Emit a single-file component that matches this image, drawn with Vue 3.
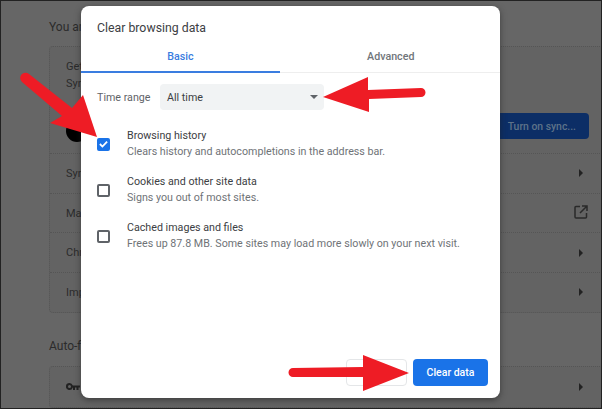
<script setup>
const rows = [
  { label: 'Sync and Google services', icon: 'chev' },
  { label: 'Manage your Google Account', icon: 'ext' },
  { label: 'Chrome name and picture', icon: 'chev' },
  { label: 'Import bookmarks and settings', icon: 'chev' },
]
const options = [
  { title: 'Browsing history', desc: 'Clears history and autocompletions in the address bar.', on: true },
  { title: 'Cookies and other site data', desc: 'Signs you out of most sites.', on: false },
  { title: 'Cached images and files', desc: 'Frees up 87.8 MB. Some sites may load more slowly on your next visit.', on: false },
]
</script>

<template>
  <div class="screen">
    <div class="page">
      <h2 class="head first">You and Google</h2>
      <section class="card">
        <div class="sync">
          <div class="sync-text">
            <div>Get Google smarts in Chrome</div>
            <div>Sync and personalize Chrome</div>
            <span class="avatar"></span>
          </div>
          <span class="sync-btn">Turn on sync...</span>
        </div>
        <div v-for="r in rows" :key="r.label" class="row">
          <span>{{ r.label }}</span>
          <svg v-if="r.icon === 'chev'" class="chev" width="6" height="8" viewBox="0 0 6 8"><path d="M1 0l4 4-4 4z" fill="#222" /></svg>
          <svg v-else class="ext" width="14" height="14" viewBox="0 0 14 14" fill="none" stroke="#2a2a2a" stroke-width="1.5"><path d="M6 1.500H2a1 1 0 0 0-1 1v9.500a1 1 0 0 0 1 1h9.500a1 1 0 0 0 1-1V8M8 1h5v5M13 1L6 8" /></svg>
        </div>
      </section>
      <h2 class="head second">Auto-fill</h2>
      <section class="card">
        <div class="row key-row">
          <svg width="14" height="8" viewBox="0 0 14 8" fill="#222"><path d="M3.500 0a3.500 3.500 0 0 1 3.300 2.500H14v2h-1.500V7h-2V4.500H9V7H7V4.500h-.2A3.500 3.500 0 1 1 3.500 0zm0 2a1.500 1.500 0 1 0 0 3 1.500 1.500 0 0 0 0-3z" /></svg>
          <svg class="chev" width="6" height="8" viewBox="0 0 6 8"><path d="M1 0l4 4-4 4z" fill="#222" /></svg>
        </div>
      </section>
    </div>

    <div class="dialog">
      <h1 class="title">Clear browsing data</h1>
      <div class="tabs">
        <div class="tab active">Basic</div>
        <div class="tab">Advanced</div>
      </div>
      <div class="range">
        <span class="range-label">Time range</span>
        <div class="select">
          <span>All time</span>
          <span class="caret"></span>
        </div>
      </div>
      <div class="options">
        <div v-for="o in options" :key="o.title" class="option">
          <span class="box" :class="{ on: o.on }">
            <svg v-if="o.on" width="10" height="8" viewBox="0 0 10 8" fill="none" stroke="#fff" stroke-width="2"><path d="M1 4l2.800 2.800L9 1.300" /></svg>
          </span>
          <div>
            <div class="opt-title">{{ o.title }}</div>
            <div class="opt-desc">{{ o.desc }}</div>
          </div>
        </div>
      </div>
      <div class="actions">
        <span class="cancel"></span>
        <span class="clear">Clear data</span>
      </div>
    </div>

    <svg class="arrows" width="602" height="409" viewBox="0 0 602 409" fill="#ee1c25" stroke="none">
      <path d="M97 137L83 95 72 108 29 74a5 5 0 0 0-7 8L62 116 50 123z" />
      <path d="M323 97L368 77 368 90 421 88a4.500 4.500 0 0 1 0 9L369 99 369 112z" />
      <path d="M409 373L363 355 363 367 293 368a4.500 4.500 0 0 0 0 9L363 377 363 391z" />
    </svg>
  </div>
</template>

<style scoped>
.screen {
  position: relative;
  width: 602px;
  height: 409px;
  overflow: hidden;
  box-sizing: border-box;
  border: 1px solid #222;
  background: #666;
  font-family: Roboto, "Liberation Sans", sans-serif;
  color: #2b2b2b;
}
.page {
  width: 600px;
  padding: 0 0 0 48px;
  font-size: 11px;
}
.head {
  margin: 0;
  font-size: 12px;
  font-weight: 400;
  line-height: 16px;
}
.head.first { padding: 18px 0 11px; }
.head.second { padding: 25px 0 12px; }
.card {
  border: 1px dotted #555;
  border-radius: 4px;
  background: #636363;
}
.sync {
  display: flex;
  justify-content: space-between;
  height: 106px;
  padding-right: 59px;
}
.sync-text {
  padding: 11px 0 0 16px;
  line-height: 17px;
}
.avatar {
  display: block;
  width: 22px;
  height: 22px;
  margin-top: 28px;
  border-radius: 50%;
  background: #000;
}
.sync-btn {
  align-self: flex-end;
  display: flex;
  align-items: center;
  justify-content: flex-end;
  box-sizing: border-box;
  width: 110px;
  height: 26px;
  margin-bottom: 14px;
  padding-right: 13px;
  border-radius: 4px;
  background: #0c2e66;
  color: #5e7389;
  font-size: 10.400px;
  font-weight: 500;
}
.row {
  display: flex;
  align-items: center;
  justify-content: space-between;
  box-sizing: border-box;
  height: 39.7px;
  padding: 0 64px 0 16px;
  border-top: 1px dotted #555;
}
.row .ext { margin: -2px -4px 0 0; }
.key-row { border-top: 0; height: 40px; }
.dialog {
  position: absolute;
  left: 80px;
  top: 5px;
  box-sizing: border-box;
  width: 419px;
  height: 392px;
  display: flex;
  flex-direction: column;
  border-radius: 8px;
  background: #fff;
  box-shadow: 0 2px 6px rgba(30, 30, 30, .55);
  color: #202124;
}
.title {
  margin: 0;
  padding: 14px 16px 0;
  font-size: 12.300px;
  font-weight: 400;
  line-height: 16px;
  color: #3c4043;
}
.tabs {
  display: flex;
  margin-top: 5px;
  border-bottom: 1px solid #eee;
}
.tab {
  width: 50%;
  height: 32px;
  box-sizing: border-box;
  padding-top: 8px;
  text-align: center;
  font-size: 10.700px;
  font-weight: 500;
  line-height: 16px;
  color: #70757a;
  margin-bottom: -1px;
}
.tab:last-child { padding-left: 12px; }
.tab.active {
  width: 199px;
  color: #3a7de0;
  border-bottom: 2px solid #3a7de0;
}
.range {
  display: flex;
  align-items: center;
  margin-top: 11px;
  padding-left: 16px;
}
.range-label {
  width: 63px;
  font-size: 10.700px;
  color: #5f6368;
}
.select {
  display: flex;
  align-items: center;
  justify-content: space-between;
  box-sizing: border-box;
  width: 164px;
  height: 26px;
  padding: 0 6px 0 7px;
  border-radius: 4px;
  background: #f1f3f4;
  font-size: 10.700px;
  color: #3c4043;
}
.caret {
  width: 0;
  height: 0;
  border-left: 4px solid transparent;
  border-right: 4px solid transparent;
  border-top: 4px solid #5f6368;
}
.options {
  flex: 1;
  margin-top: 11px;
  padding-left: 16px;
}
.option {
  display: flex;
  align-items: center;
  height: 46px;
}
.box {
  flex: none;
  display: flex;
  align-items: center;
  justify-content: center;
  box-sizing: border-box;
  width: 13px;
  height: 13px;
  margin-right: 17px;
  border: 2px solid #5f6368;
  border-radius: 2px;
}
.box.on {
  background: #1a73e8;
  border-color: #1a73e8;
}
.opt-title {
  font-size: 10.700px;
  line-height: 16px;
  color: #3c4043;
}
.opt-desc {
  font-size: 10.700px;
  line-height: 16px;
  color: #6f7377;
}
.actions {
  display: flex;
  justify-content: flex-end;
  gap: 6px;
  padding: 0 12px 12px 0;
}
.cancel {
  width: 61px;
  height: 27px;
  box-sizing: border-box;
  border: 1px solid #e4e6e8;
  border-radius: 4px;
}
.clear {
  display: flex;
  align-items: center;
  justify-content: center;
  width: 75px;
  height: 27px;
  border-radius: 4px;
  background: #1a73e8;
  color: #fff;
  font-size: 10.500px;
  font-weight: 500;
}
.arrows {
  position: absolute;
  left: -1px;
  top: -1px;
}
</style>
